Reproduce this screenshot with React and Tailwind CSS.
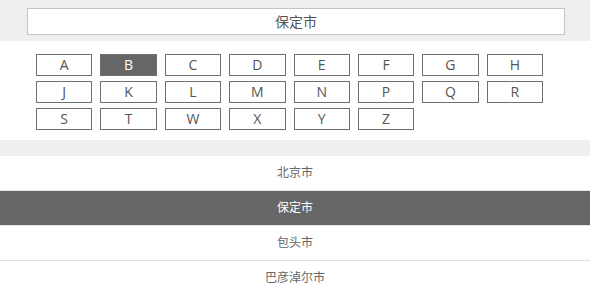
import React from "react";

const letters = ["A","B","C","D","E","F","G","H","J","K","L","M","N","P","Q","R","S","T","W","X","Y","Z"];
const cities = ["北京市","保定市","包头市","巴彦淖尔市"];

export default function App() {
  return (
    <div className="w-[590px] h-[293px] overflow-hidden bg-white" style={{fontFamily: '"Open Sans", "Noto Sans CJK SC", sans-serif'}}>
      <div className="bg-[#efefef] h-[41px] pt-[8px] pl-[27px]">
        <div className="w-[538px] h-[27px] bg-white border border-[#c4c4c4] flex items-center justify-center text-[14px] text-[#555]">
          保定市
        </div>
      </div>
      <div className="pt-[13px] pb-[10px] pl-[36px]">
        <div className="grid grid-cols-8 w-[507px] gap-x-[8px] gap-y-[5px]">
          {letters.map((l) => (
            <div
              key={l}
              className={
                "h-[22px] border border-[#707070] flex items-center justify-center text-[14px] leading-none " +
                (l === "B" ? "bg-[#666] text-white" : "bg-white text-[#555]")
              }
            >
              {l}
            </div>
          ))}
        </div>
      </div>
      <div className="bg-[#efefef] h-[16px]"></div>
      <div>
        {cities.map((c, i) => (
          <div
            key={c}
            className={
              "h-[35px] border-b border-[#e2e2e2] flex items-center justify-center text-[12px] " +
              (i === 1 ? "bg-[#666] text-white" : "bg-white text-[#666]")
            }
          >
            {c}
          </div>
        ))}
      </div>
    </div>
  );
}
